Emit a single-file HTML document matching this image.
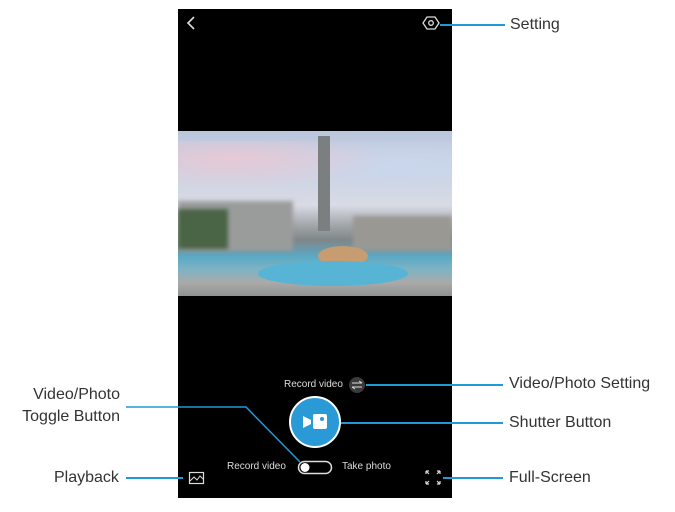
<!DOCTYPE html>
<html><head><style>
body{margin:0;width:675px;height:512px;background:#fff;position:relative;overflow:hidden;font-family:"Liberation Sans",sans-serif}
.ph{position:absolute;left:178px;top:9px;width:274px;height:489px;background:#000}
.photo{position:absolute;left:178px;top:131px;width:274px;height:165px;overflow:hidden;
background:linear-gradient(180deg,#b9c6dc 0%,#cdd3e3 25%,#d8dbe4 45%,#9ea3a6 58%,#7f8689 66%,#5aa9c4 76%,#7fb3c4 84%,#a9aaa8 92%,#8f9291 100%)}
.lab{position:absolute;font-size:16px;color:#333;white-space:nowrap}
.ln{position:absolute;height:1.5px;background:#1e9bd7}
.w{position:absolute;color:#ddd;font-size:10px;white-space:nowrap}
</style></head><body>
<div class="ph"></div>
<div class="photo">
 <div style="position:absolute;left:0;top:10px;width:274px;height:60px;background:radial-gradient(ellipse at 20% 30%,#e7c9d6 0,transparent 50%),radial-gradient(ellipse at 80% 40%,#c9d7ec 0,transparent 60%)"></div>
 <div style="position:absolute;left:140px;top:5px;width:12px;height:95px;background:#7c7f80"></div>
 <div style="position:absolute;left:0;top:70px;width:115px;height:50px;background:#9a9c9c;filter:blur(2px)"></div>
 <div style="position:absolute;left:0;top:78px;width:50px;height:40px;background:#4a6446;filter:blur(2px)"></div>
 <div style="position:absolute;left:175px;top:85px;width:99px;height:35px;background:#9a9893;filter:blur(2px)"></div>
 <div style="position:absolute;left:140px;top:115px;width:50px;height:20px;background:#c69c70;border-radius:50%"></div>
 <div style="position:absolute;left:80px;top:130px;width:150px;height:25px;background:#57b4d4;border-radius:50%"></div>
</div>
<svg style="position:absolute;left:0;top:0" width="675" height="512">
 <path d="M194 17 L188 23 L194 29" stroke="#ddd" stroke-width="1.6" fill="none"/>
 <circle cx="431" cy="23" r="2.3" stroke="#ddd" stroke-width="1.3" fill="none"/>
 <path d="M427 17 L435 17 L439 23 L435 29 L427 29 L423 23 Z" stroke="#ddd" stroke-width="1.3" fill="none" stroke-linejoin="round"/>
 <circle cx="357" cy="385" r="8" fill="#3a3a3a"/>
 <path d="M352 383 H362 M359 381 L362 383 M362 387 H352 M355 389 L352 387" stroke="#ddd" stroke-width="1" fill="none"/>
 <circle cx="315" cy="422" r="25" fill="#2a9ad6" stroke="#fff" stroke-width="2"/>
 <rect x="313" y="414" width="14" height="15" rx="2" fill="#fff"/>
 <path d="M303 416 L311 420 L311 424 L303 428 Z" fill="#fff"/>
 <circle cx="322" cy="419" r="2" fill="#2a9ad6"/>
 <rect x="298.5" y="461.5" width="33" height="12" rx="6" stroke="#ddd" stroke-width="1.5" fill="none"/>
 <circle cx="305" cy="467.5" r="4.5" fill="#fff"/>
 <rect x="189.5" y="472.5" width="14" height="11" stroke="#ddd" stroke-width="1.2" fill="none"/>
 <path d="M190 481 L194 477 L197 480 L200 476 L203 479" stroke="#ddd" stroke-width="1" fill="none"/>
 <path d="M426 471 L429 474 M426 471 H429 M426 471 V474 M440 471 L437 474 M440 471 H437 M440 471 V474 M426 484 L429 481 M426 484 H429 M426 484 V481 M440 484 L437 481 M440 484 H437 M440 484 V481" stroke="#ddd" stroke-width="1.2" fill="none"/>
 <path d="M126 407 H246 L300 462" stroke="#1e9bd7" stroke-width="1.5" fill="none"/>
</svg>
<div class="w" style="left:284px;top:379px">Record video</div>
<div class="w" style="left:227px;top:461px">Record video</div>
<div class="w" style="left:342px;top:461px">Take photo</div>
<div class="ln" style="left:440px;top:24px;width:65px"></div>
<div class="ln" style="left:366px;top:384px;width:137px"></div>
<div class="ln" style="left:341px;top:422px;width:162px"></div>
<div class="ln" style="left:443px;top:477px;width:60px"></div>
<div class="ln" style="left:126px;top:477px;width:57px"></div>
<div class="lab" style="left:510px;top:16px">Setting</div>
<div class="lab" style="left:509px;top:375px">Video/Photo Setting</div>
<div class="lab" style="left:509px;top:414px">Shutter Button</div>
<div class="lab" style="left:509px;top:469px">Full-Screen</div>
<div class="lab" style="left:54px;top:469px">Playback</div>
<div class="lab" style="left:4px;top:384px;width:116px;text-align:right;line-height:22px">Video/Photo<br>Toggle Button</div>
</body></html>
